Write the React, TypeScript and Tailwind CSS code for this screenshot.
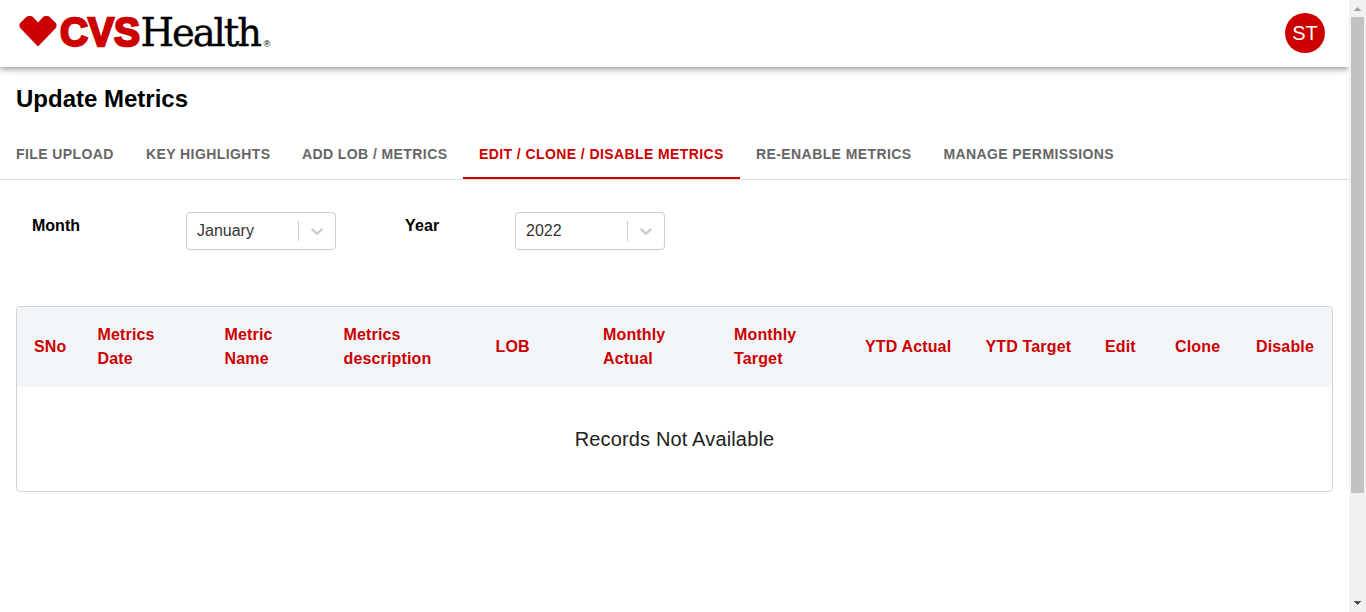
const tabs = [
  { label: 'FILE UPLOAD', width: 'w-[130px]' },
  { label: 'KEY HIGHLIGHTS', width: 'w-[156px]' },
  { label: 'ADD LOB / METRICS', width: 'w-[177px]' },
  { label: 'EDIT / CLONE / DISABLE METRICS', width: 'w-[277px]', active: true },
  { label: 'RE-ENABLE METRICS', width: 'w-[187.4px]' },
  { label: 'MANAGE PERMISSIONS', width: 'w-[203px]' },
];

const columns = [
  { lines: ['SNo'], width: 'w-[63.5px]' },
  { lines: ['Metrics', 'Date'], width: 'w-[127px]' },
  { lines: ['Metric', 'Name'], width: 'w-[119px]' },
  { lines: ['Metrics', 'description'], width: 'w-[152px]' },
  { lines: ['LOB'], width: 'w-[107.5px]' },
  { lines: ['Monthly', 'Actual'], width: 'w-[131px]' },
  { lines: ['Monthly', 'Target'], width: 'w-[131px]' },
  { lines: ['YTD Actual'], width: 'w-[120.5px]' },
  { lines: ['YTD Target'], width: 'w-[119.5px]' },
  { lines: ['Edit'], width: 'w-[70px]' },
  { lines: ['Clone'], width: 'w-[81px]' },
  { lines: ['Disable'], width: 'w-[93px]' },
];

function Logo() {
  return (
    <svg width="260" height="66" viewBox="0 0 260 66" role="img" aria-label="CVS Health">
      <path
        d="M7 17.2Q8.4 16 10 16H11.4Q13 16 14.2 17.2L19 22.4L23.8 17.2Q25 16 26.6 16H28Q29.6 16 31 17.2L36.8 23Q38.6 25.6 36.6 28.2L19 46.6L1.4 28.2Q-0.6 25.6 1.2 23Z"
        fill="#c00"
      />
      <text x="41" y="46" fontSize="40.5" textLength="80" lengthAdjust="spacingAndGlyphs" fill="#c00" stroke="#c00" strokeWidth="2.4" className="font-['Liberation_Sans',sans-serif] font-bold">
        CVS
      </text>
      <text x="121.5" y="46" fontSize="38.5" textLength="121.5" lengthAdjust="spacing" fill="#000" stroke="#000" strokeWidth="0.4" className="font-['DejaVu_Serif',serif]">
        Health
      </text>
      <text x="244.5" y="46.5" fontSize="9.5" fill="#000" className="font-['Liberation_Sans',sans-serif]">
        ®
      </text>
    </svg>
  );
}

function Select({ value }: { value: string }) {
  return (
    <div className="flex h-[38px] w-[150px] items-center rounded-[4px] border border-[#ccc] bg-white">
      <span className="flex-1 pl-[10px] text-base leading-6 text-[#333]">{value}</span>
      <span className="h-5 w-px bg-[#ccc]" />
      <span className="flex w-9 justify-center">
        <svg width="20" height="20" viewBox="0 0 20 20" fill="#ccc">
          <path d="M4.516 7.548c0.436-0.446 1.043-0.481 1.576 0l3.908 3.747 3.908-3.747c0.533-0.481 1.141-0.446 1.574 0 0.436 0.445 0.408 1.197 0 1.615-0.406 0.418-4.695 4.502-4.695 4.502-0.217 0.223-0.502 0.335-0.787 0.335s-0.57-0.112-0.789-0.335c0 0-4.287-4.084-4.695-4.502s-0.436-1.17 0-1.615z" />
        </svg>
      </span>
    </div>
  );
}

function Scrollbar() {
  return (
    <div className="flex w-[17px] shrink-0 flex-col items-center bg-[#f1f1f1]">
      <svg width="17" height="17" viewBox="0 0 17 17" shapeRendering="crispEdges">
        <path d="M5 11H12L8.5 7Z" fill="#a3a3a3" />
      </svg>
      <div className="h-[476px] w-[13px] bg-[#c1c1c1]" />
      <svg className="mt-auto" width="17" height="17" viewBox="0 0 17 17" shapeRendering="crispEdges">
        <path d="M5 6H12L8.5 10Z" fill="#505050" />
      </svg>
    </div>
  );
}

export default function App() {
  return (
    <div className="flex h-[612px] overflow-hidden bg-white font-['Liberation_Sans',Arial,sans-serif] text-black">
      <main className="flex min-w-0 flex-1 flex-col overflow-hidden">
        <header className="flex h-[67px] shrink-0 items-center justify-between pr-6 pb-px pl-[19px] shadow-[0_2px_4px_-1px_rgba(0,0,0,0.2),0_4px_5px_0_rgba(0,0,0,0.14),0_1px_10px_0_rgba(0,0,0,0.12)]">
          <Logo />
          <div className="flex size-10 items-center justify-center rounded-full bg-[#c00] text-xl text-white">ST</div>
        </header>

        <h1 className="mt-4 ml-4 h-8 text-2xl leading-8 font-bold">Update Metrics</h1>

        <nav className="mt-[15px] flex h-[50px] shrink-0 border-b border-[#e0e0e0]">
          {tabs.map((tab) => (
            <button
              key={tab.label}
              className={`h-[49px] shrink-0 border-b-2 pl-4 text-left text-sm font-bold tracking-[0.41px] whitespace-nowrap ${tab.width} ${
                tab.active ? 'border-[#c00] text-[#c00]' : 'border-transparent text-[#666]'
              }`}
            >
              {tab.label}
            </button>
          ))}
        </nav>

        <section className="mt-8 flex pl-8">
          <label className="w-[154px] pt-[2px] text-base font-bold">Month</label>
          <Select value="January" />
          <label className="ml-[69px] w-[110px] pt-[2px] text-base font-bold tracking-[0.17px]">Year</label>
          <Select value="2022" />
        </section>

        <section className="mt-14 mr-4 ml-4 h-[186px] overflow-hidden rounded-[4px] border border-[#d3d3d3]">
          <div className="flex h-20 items-center bg-[#f1f5f8] pl-[17px]">
            {columns.map((column) => (
              <div key={column.lines.join(' ')} className={`shrink-0 text-base font-bold tracking-[0.15px] text-[#c00] ${column.width}`}>
                {column.lines.map((line) => (
                  <div key={line}>{line}</div>
                ))}
              </div>
            ))}
          </div>
          <div className="flex h-[104px] items-center justify-center text-xl tracking-[0.15px] text-[#212121]">
            Records Not Available
          </div>
        </section>
      </main>
      <Scrollbar />
    </div>
  );
}
